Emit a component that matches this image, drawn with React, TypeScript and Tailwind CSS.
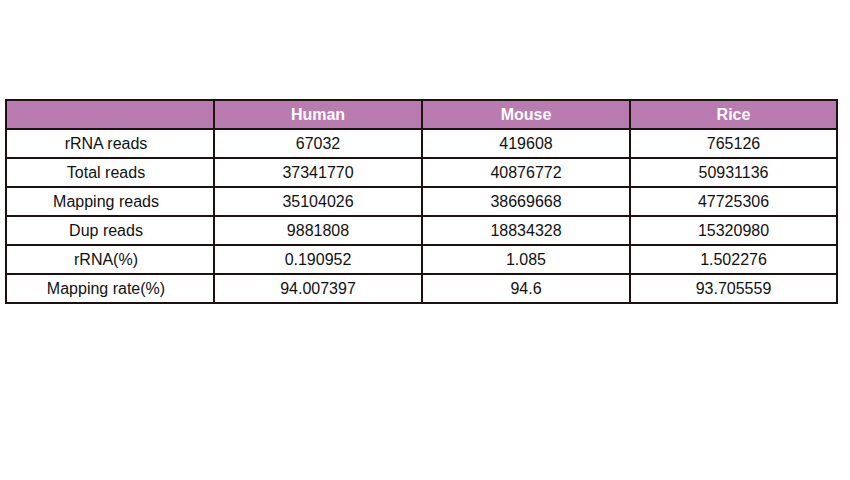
import React from 'react';

const COLUMNS = ['Human', 'Mouse', 'Rice'];

const ROWS: [string, string, string, string][] = [
  ['rRNA reads', '67032', '419608', '765126'],
  ['Total reads', '37341770', '40876772', '50931136'],
  ['Mapping reads', '35104026', '38669668', '47725306'],
  ['Dup reads', '9881808', '18834328', '15320980'],
  ['rRNA(%)', '0.190952', '1.085', '1.502276'],
  ['Mapping rate(%)', '94.007397', '94.6', '93.705559'],
];

export default function App() {
  return (
    <div className="w-[850px] h-[480px] bg-white pt-[99px] pl-[5px] font-['Liberation_Sans',Arial,sans-serif]">
      <table className="w-[831px] table-fixed border-collapse border-2 border-[#1c1212] text-[16px]">
        <colgroup>
          <col className="w-[208px]" />
          <col className="w-[208px]" />
          <col className="w-[208px]" />
          <col className="w-[207px]" />
        </colgroup>
        <thead>
          <tr className="h-[29px] bg-[#b97bb0]">
            <th className="border-2 border-[#1c1212]"></th>
            {COLUMNS.map((c) => (
              <th key={c} className="border-2 border-[#1c1212] text-white font-bold text-center">
                {c}
              </th>
            ))}
          </tr>
        </thead>
        <tbody>
          {ROWS.map((row) => (
            <tr key={row[0]} className="h-[29px]">
              {row.map((cell, i) => (
                <td
                  key={i}
                  className={
                    i === 0
                      ? 'border-2 border-[#1c1212] text-center text-[#111] font-normal leading-none pr-[8px]'
                      : 'border-2 border-[#1c1212] text-center text-[#111] font-normal leading-none'
                  }
                >
                  {cell}
                </td>
              ))}
            </tr>
          ))}
        </tbody>
      </table>
    </div>
  );
}
